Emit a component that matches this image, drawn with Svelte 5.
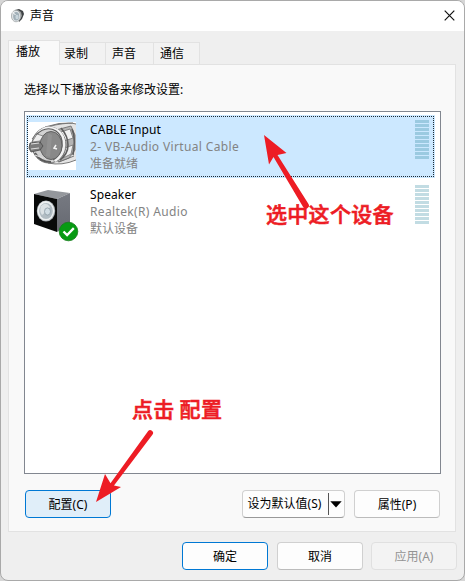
<script>
  const tabs = ['播放', '录制', '声音', '通信'];
  const devices = [
    { name: 'CABLE Input', driver: '2- VB-Audio Virtual Cable', state: '准备就绪', icon: 'cable', selected: true },
    { name: 'Speaker', driver: 'Realtek(R) Audio', state: '默认设备', icon: 'speaker', selected: false }
  ];
  const bars = Array(10).fill(0);
</script>

<main class="window">
  <header>
    <svg class="app-icon" width="14" height="14" viewBox="0 0 14 14">
      <path d="M4 1 8 0 12 2 13 5 11 10 8 13Z" fill="#3f4345" />
      <path d="m7 1 3 2 1 4-3 5Z" fill="#96999a" />
      <ellipse cx="5" cy="7" rx="4.6" ry="5.8" fill="#dfe3e5" stroke="#a3a8aa" stroke-width=".8" />
      <ellipse cx="5.2" cy="7.2" rx="3" ry="4.2" fill="#a1afb7" />
      <ellipse cx="6" cy="8" rx="1.6" ry="2.3" fill="#c8d5dc" />
      <path d="m1.5 3 3 3" stroke="#fff" />
    </svg>
    <h1>声音</h1>
    <svg class="close" width="11" height="11" viewBox="0 0 11 11"><path d="m.7.7 9.6 9.6M10.3.7.7 10.3" stroke="#111" stroke-width="1.2" /></svg>
  </header>

  <nav>
    {#each tabs as tab, i}
      <span class="tab" class:active={i === 0}>{tab}</span>
    {/each}
  </nav>

  <section class="panel">
    <p>选择以下播放设备来修改设置:</p>
    <div class="list">
      {#each devices as device}
        <div class="device" class:selected={device.selected}>
          {#if device.selected}
            <svg class="focus" width="407" height="61"><path d="M0 .5h407M0 60.5h407M.5 2v58M406.5 2v58" fill="none" stroke="#1b2a35" stroke-dasharray="1 1" /></svg>
          {/if}
          {#if device.icon === 'cable'}
            <svg class="picture" width="48" height="48" viewBox="0 0 48 48">
              <rect width="48" height="48" fill="#fff" />
              <path d="M12 7Q24 1 48 2V38Q34 43 20 41Z" fill="#e4e4e4" />
              <path d="M4 17Q11 6 27 3T48 2M17 5Q31 0 45 1M20 41q14 3 28-3M31 40l15-6" fill="none" stroke="#777" stroke-width="1" />
              <path d="M28 8 43 4l4 9v15l-6 8-11 4Z" fill="#b4b4b4" stroke="#666" stroke-width=".8" />
              <path d="m33 10 9-3 3 9-9 3Zm4 16 8-3-2 9-8 4Z" fill="#f1f1f1" stroke="#666" stroke-width=".7" />
              <path d="M33 6q7 8 7 17t-8 15M44 7q4 9 1 26" fill="none" stroke="#5d5d5d" stroke-width="1.6" />
              <ellipse cx="21" cy="23" rx="17" ry="18" fill="#d2d2d2" stroke="#737373" />
              <path d="M10 11Q19 2 29 8q8 5 7 16-1 10-9 15" fill="none" stroke="#f3f3f3" stroke-width="2.2" />
              <path d="M8 13Q18 3 28 9q7 5 6 15-1 9-9 14" fill="none" stroke="#5e5e5e" stroke-width="1.2" />
              <path d="M7 31q5 9 16 9" fill="none" stroke="#5a5a5a" stroke-width="2" />
              <ellipse cx="23" cy="23.5" rx="11" ry="14" fill="#898989" stroke="#626262" />
              <path d="m20 11 4 2-2 22-4-1Z" fill="#929292" />
              <path d="m9 12 6 2-3 5-8 1Z" fill="#eee" stroke="#666" stroke-width=".7" />
              <path d="m2 21 10-1 3 4-3 4-9 2-2-4Z" fill="#7b7b7b" stroke="#494949" stroke-width=".8" />
              <path d="m3 22 8-1M3 27l8-1m-4 7 8 3" stroke="#ddd" stroke-width="1.1" />
              <path d="m28 23-2 3 3 1" fill="none" stroke="#f5f5f5" stroke-width="1.5" />
            </svg>
          {:else}
            <svg class="picture" width="50" height="58" viewBox="0 0 50 58">
              <defs><linearGradient id="side" x2="0" y2="1"><stop stop-color="#777a82" /><stop offset="1" stop-color="#666971" /></linearGradient></defs>
              <path d="M5 9 19 5 41 8 28 14Z" fill="#94979c" />
              <path d="M28 14 41 8V38L28 47Z" fill="url(#side)" />
              <path d="m5 9 23 5v33L5 39Z" fill="#080909" />
              <ellipse cx="17" cy="26" rx="9.2" ry="10.5" fill="#aeb5ba" />
              <ellipse cx="16.8" cy="25.8" rx="8.4" ry="9.7" fill="#edf0f1" />
              <ellipse cx="17" cy="26" rx="6.8" ry="8.1" fill="#b1bcc3" />
              <path d="M12 21q5-5 9 1l-3 4-5 4q-3-4-1-9Z" fill="#dce2e5" />
              <ellipse cx="18.5" cy="26.5" rx="3" ry="3.6" fill="#d0dce3" stroke="#8b9ba4" stroke-width=".8" />
              <circle cx="39.5" cy="46.5" r="9.3" fill="#079b13" stroke="#147c1b" stroke-width=".8" />
              <path d="m34.5 46.5 3.6 3.6 6.7-7" fill="none" stroke="#fff" stroke-width="2.3" />
            </svg>
          {/if}
          <div class="info">
            <strong>{device.name}</strong>
            <span>{device.driver}</span>
            <span class="state">{device.state}</span>
          </div>
          <div class="meter">{#each bars as _}<i></i>{/each}</div>
        </div>
      {/each}
    </div>
    <div class="actions">
      <button class="configure">配置(C)</button>
      <div class="split"><span>设为默认值(S)</span><b><svg width="12" height="7" viewBox="0 0 12 7"><path d="M.3.3h11.4L6 6.5Z" /></svg></b></div>
      <button>属性(P)</button>
    </div>
  </section>

  <footer>
    <button class="primary">确定</button>
    <button>取消</button>
    <button class="disabled">应用(A)</button>
  </footer>

  <svg class="arrows" width="465" height="581" viewBox="0 0 465 581">
    <g fill="#ed1c24">
      <path d="m264 135 22.5 18-9 2L308.5 204a3 3 0 0 1-5.4 3L273.5 157l-4.5 7.5Z" />
      <path d="m96 502 9-28 5.5 9.2L148 431.3a2.8 2.8 0 0 1 4.4 3.5L114 485.5l7 1.5Z" />
    </g>
  </svg>
  <div class="note select">选中这个设备</div>
  <div class="note click">点击 配置</div>
</main>

<style>
  :global(body) { margin: 0; background: #d6d6d6; }
  .window {
    box-sizing: border-box; position: relative; width: 465px; height: 581px;
    border: 1px solid #a9a9a9; border-radius: 8px; background: #efefef; overflow: hidden;
    font: 12px/17px "Noto Sans", "Noto Sans CJK SC", sans-serif; color: #000;
  }
  header { display: flex; align-items: center; height: 30px; padding: 0 9px 0 10px; background: #fff; }
  header h1 { margin: -2px auto 0 5px; font: inherit; }
  .close { margin-top: -2px; }
  nav { display: flex; align-items: flex-end; height: 33px; padding-left: 7px; }
  .tab {
    box-sizing: border-box; height: 22px; width: 48px; padding: 2px 0 0 6px;
    border: 1px solid #e2e2e2; border-width: 1px 1px 0 0; background: #f2f2f2;
  }
  .tab:nth-child(2) { width: 46px; padding-left: 4px; }
  .tab:nth-child(4) { width: 46px; }
  .tab.active { position: relative; width: 52px; height: 25px; margin-bottom: -1px; padding: 2px 0 0 7px; border-left-width: 1px; background: #f9f9f9; }
  .panel { box-sizing: border-box; width: 448px; height: 468px; margin-left: 7px; padding: 16px 15px 0; border: 1px solid #e2e2e2; background: #f9f9f9; }
  p { margin: 0; height: 30px; }
  .list { box-sizing: border-box; width: 417px; height: 363px; padding: 3px 5px 0 1px; border: 1px solid #828790; background: #fff; }
  .device { position: relative; box-sizing: border-box; display: flex; width: 409px; height: 63px; margin-bottom: 2px; padding: 5px 6px 0 3px; }
  .selected { background: #cce8ff; }
  .focus { position: absolute; left: 1px; top: 1px; }
  .picture { flex: none; }
  .selected .picture { margin: 2px 1px 0 -1px; }
  .info { display: flex; flex-direction: column; width: 170px; margin: 1px 0 0 13px; }
  .picture[width="50"] + .info { margin-left: 11px; }
  .info strong { font-weight: 400; letter-spacing: .1px; }
  .info span { color: #838383; letter-spacing: .36px; }
  .info .state { letter-spacing: 0; }
  .meter { display: flex; flex-direction: column; gap: 1px; width: 14px; margin-left: auto; }
  .meter i { height: 3px; background: #c2dce3; }
  .selected .meter i { background: #9bcae1; }
  .actions { display: flex; height: 28px; margin: 16px 0 0 1px; }
  button {
    box-sizing: border-box; width: 86px; height: 28px; padding: 0; border: 1px solid #d0d0d0; border-bottom-color: #bcbcbc;
    border-radius: 4px; background: #fdfdfd; color: #000; font: inherit;
  }
  button.configure { border-color: #0078d4; background: #e0eef9; }
  .split { box-sizing: border-box; display: flex; align-items: center; width: 103px; margin: 0 9px 0 131px; border: 1px solid #d0d0d0; border-bottom-color: #999; border-radius: 4px; background: #fdfdfd; }
  .split span { width: 85px; text-align: center; line-height: 26px; white-space: nowrap; text-indent: -2px; }
  .split b { display: flex; align-items: center; height: 22px; border-left: 1px solid #555; padding-left: 1px; }
  footer { display: flex; margin: 10px 0 0 181px; gap: 9px; }
  button.primary { border-color: #0078d4; }
  button.disabled { margin-left: -1px; border-color: #e0e0e0; background: #f3f3f3; color: #939393; }
  .arrows { position: absolute; left: -1px; top: -1px; }
  .note { position: absolute; color: #ed1c24; font: 500 21px/28px "Noto Sans CJK SC", sans-serif; letter-spacing: .3px; white-space: nowrap; -webkit-text-stroke: .6px #ed1c24; }
  .select { left: 265px; top: 198px; }
  .click { left: 131px; top: 393px; }
</style>
